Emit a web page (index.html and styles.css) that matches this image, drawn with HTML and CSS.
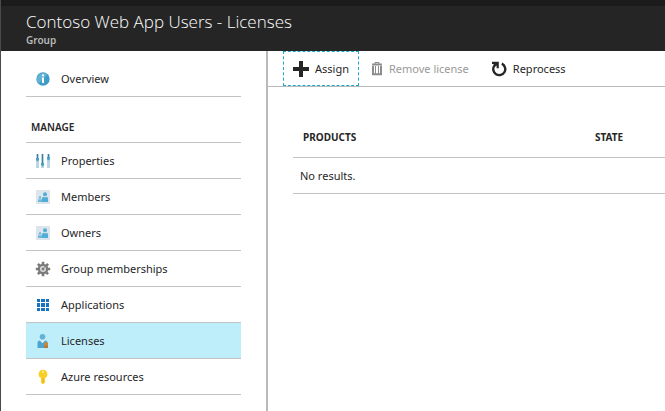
FILE: index.html
```
<!DOCTYPE html>
<html lang="en">
<head>
<meta charset="utf-8">
<title>Contoso Web App Users - Licenses</title>
<link rel="stylesheet" href="styles.css">
</head>
<body>
<div class="blade">
  <header class="header">
    <h1 class="title">Contoso Web App Users - Licenses</h1>
    <p class="subtitle">Group</p>
  </header>
  <div class="body">
    <nav class="sidebar" aria-label="Group menu">
      <a class="item" href="#">
        <svg class="icon" viewBox="0 0 16 16"><circle cx="8" cy="8" r="6.7" fill="#3f9cc6"/><path d="M3.3 12.7A6.7 6.7 0 0 1 12.7 3.3z" fill="#64b3d5"/><path d="M7 6.5h2V12H7z" fill="#fff"/><circle cx="8" cy="4.4" r="1.1" fill="#fff"/></svg>
        Overview</a>
      <h2 class="section">MANAGE</h2>
      <a class="item" href="#">
        <svg class="icon" viewBox="0 0 16 16"><path d="M1 1h3v14H1zM6 1h3v14H6zM12 1h3v14h-3z" fill="#b9d5e2"/><path d="M2 1h1v6H2zM7 1h1v12H7zM13 1h1v5h-1z" fill="#3a7f9f"/><path d="M1 5h3v2L2.500 8.500 1 7zM6 10h3v2l-1.500 1.500L6 12zM12 4h3v2l-1.500 1.500L12 6z" fill="#4b9fc4"/></svg>
        Properties</a>
      <a class="item" href="#">
        <svg class="icon" viewBox="0 0 16 16"><path d="M1 1h14v14H1z" fill="#dce5eb"/><circle cx="10" cy="5.200" r="2" fill="#51add5"/><path d="M7 13V9.500Q7 7.800 9 7.800l1 1 1-1q2 0 2 1.700V13z" fill="#51add5"/><circle cx="5" cy="8.500" r="1.300" fill="#6eb9da"/><path d="M3 13v-2q0-1 1-1l1 .7 1-.7q1 0 1 1v2z" fill="#6eb9da"/></svg>
        Members</a>
      <a class="item" href="#">
        <svg class="icon" viewBox="0 0 16 16"><path d="M1 1h14v14H1z" fill="#dce5eb"/><circle cx="10" cy="5.200" r="2" fill="#51add5"/><path d="M7 13V9.500Q7 7.800 9 7.800l1 1 1-1q2 0 2 1.700V13z" fill="#51add5"/><circle cx="5" cy="8.500" r="1.300" fill="#6eb9da"/><path d="M3 13v-2q0-1 1-1l1 .7 1-.7q1 0 1 1v2z" fill="#6eb9da"/></svg>
        Owners</a>
      <a class="item" href="#">
        <svg class="icon" viewBox="0 0 16 16"><g stroke="#7b7b7b" stroke-width="2.600"><path d="M8 .8v14.400M.8 8h14.400M2.900 2.900l10.200 10.200M13.100 2.900L2.900 13.100"/></g><circle cx="8" cy="8" r="5.300" fill="#7b7b7b"/><circle cx="8" cy="8" r="3" fill="#dedede"/><circle cx="8" cy="8" r="1.500" fill="#7b7b7b"/><path d="M8 8l2.500-3" stroke="#7b7b7b"/></svg>
        Group memberships</a>
      <a class="item" href="#">
        <svg class="icon" viewBox="0 0 16 16"><path d="M2 2h3v3H2zM6 2h4v3H6zM11 2h3v3h-3zM2 6h3v4H2zM6 6h4v4H6zM11 6h3v4h-3zM2 11h3v3H2zM6 11h4v3H6zM11 11h3v3h-3z" fill="#1673c4"/></svg>
        Applications</a>
      <a class="item current" href="#" aria-current="page">
        <svg class="icon" viewBox="0 0 16 16"><circle cx="7.500" cy="3.800" r="2.800" fill="#62b2d7"/><path d="M2.500 15V9.500Q2.500 7.500 5 7.500L7.500 10 10 7.500q2.500 0 2.500 2V15z" fill="#4da5d0"/><path d="M5 7.500h5L7.500 10z" fill="#d8eff8"/><path d="M9 10h4v5H9z" fill="#b07a3c"/><circle cx="11" cy="11" r="2" fill="#c28b43"/></svg>
        Licenses</a>
      <a class="item" href="#">
        <svg class="icon" viewBox="0 0 16 16"><path d="M8 .8a4.400 4.400 0 0 1 2 8.300v4.400L8 15.500 6 13.500V9.100A4.400 4.400 0 0 1 8 .8z" fill="#f8cf24"/><circle cx="8" cy="3" r="1" fill="#fff2ad"/><path d="M7.500 9h1v5h-1z" fill="#e8af16"/></svg>
        Azure resources</a>
    </nav>
    <main class="content">
      <div class="toolbar">
        <button class="command focused" type="button">
          <svg class="icon" viewBox="0 0 16 16"><path d="M6 0h4v6h6v4h-6v6H6v-6H0V6h6z" fill="#262626"/></svg>
          Assign</button>
        <button class="command" type="button" disabled>
          <svg class="icon narrow" viewBox="0 0 12 16"><path d="M4 3V1.500h4V3" fill="none" stroke="#8c8c8c"/><path d="M1 3.500h10M2 5v8.300h8V5" fill="none" stroke="#8c8c8c" stroke-width="2"/><path d="M4.500 5v8M7.500 5v8" stroke="#8c8c8c"/></svg>
          Remove license</button>
        <button class="command" type="button">
          <svg class="icon" viewBox="0 0 16 16"><path d="M10.800 2.700A6 6 0 1 1 3.400 4.600" fill="none" stroke="#262626" stroke-width="2.400"/><path d="M1 .8h6.800v6.400H5.600V4.500L4 5.800 2 4l1.200-1H1z" fill="#262626"/></svg>
          Reprocess</button>
      </div>
      <table class="licenses">
        <thead><tr><th scope="col">PRODUCTS</th><th scope="col" class="state">STATE</th></tr></thead>
        <tbody><tr><td colspan="2">No results.</td></tr></tbody>
      </table>
    </main>
  </div>
</div>
</body>
</html>
```
FILE: styles.css
```
* { box-sizing: border-box; }
body {
  margin: 0;
  background: #fff;
  color: #262626;
  font: 11px/16px "Noto Sans", "Open Sans", sans-serif;
}
.blade {
  min-height: 100vh;
  display: flex;
  flex-direction: column;
  border-left: 1px solid #4a4a4a;
}
.header {
  padding: 4px 25px 5px;
  border-top: 6px solid #1b1b1b;
  background: #252525;
  color: #fff;
}
.title {
  margin: 0;
  font: 300 17px/24px "Open Sans", sans-serif;
}
.subtitle {
  margin: 0;
  color: #b8b8b8;
  font-size: 10px;
  font-weight: 600;
  line-height: 12px;
}
.body { flex: 1; display: flex; }
.sidebar {
  flex: 0 0 267px;
  padding: 10px 25px 0;
  border-right: 2px solid #b9b9b9;
}
.item {
  display: flex;
  align-items: center;
  gap: 10px;
  height: 36px;
  padding: 1px 0 0 9px;
  border-bottom: 1px solid #c3c3c3;
  color: inherit;
  text-decoration: none;
}
.current { background: #bfeefb; }
.section {
  margin: 0;
  padding: 22px 5px 7px;
  border-bottom: 1px solid #c3c3c3;
  font-size: 10px;
  font-weight: 600;
  line-height: 16px;
}
.icon { flex: none; width: 16px; height: 16px; }
.narrow { width: 12px; }
.content { flex: 1; min-width: 0; }
.toolbar {
  display: flex;
  height: 36px;
  padding-left: 15px;
  border-bottom: 1px solid #b9b9b9;
}
.command {
  display: flex;
  align-items: center;
  gap: 6px;
  padding: 0 9px;
  border: 1px solid transparent;
  background: none;
  color: inherit;
  font: inherit;
  white-space: nowrap;
}
.command + .command { padding: 0 9px 0 11px; }
.command:disabled { color: #999; }
.focused { border: 1px dashed #1ba6cc; }
.licenses {
  width: calc(100% - 25px);
  margin: 30px 0 0 25px;
  border-collapse: collapse;
  table-layout: fixed;
}
.licenses th {
  height: 40px;
  padding: 0 10px;
  border-bottom: 1px solid #c3c3c3;
  font-size: 10px;
  font-weight: 700;
  text-align: left;
}
.licenses .state { width: 80px; }
.licenses td {
  height: 36px;
  padding: 1px 7px 0;
  border-bottom: 1px solid #c3c3c3;
}
```
